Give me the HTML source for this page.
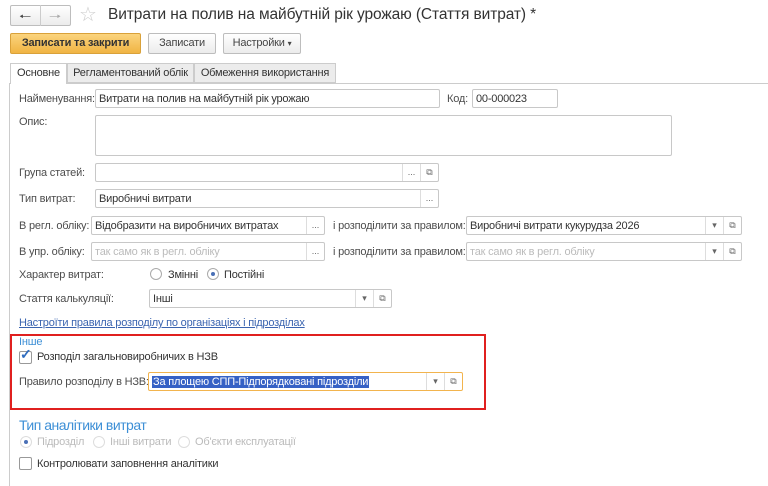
<!DOCTYPE html>
<html><head><meta charset="utf-8"><style>
*{box-sizing:border-box;margin:0;padding:0}
body{width:768px;height:486px;background:#fff;font-family:"Liberation Sans",Arial,sans-serif;font-size:11px;letter-spacing:-0.2px;color:#333;position:relative;overflow:hidden}
.a{position:absolute;white-space:nowrap}
.lbl{color:#4d4d4d}
.in{position:absolute;border:1px solid #c8c8c8;border-radius:2px;background:#fff;height:19px;padding:3px 3px;line-height:13px;white-space:nowrap;overflow:hidden}
.ph{color:#bbb}
.sb{position:absolute;top:0;bottom:0;width:18px;border-left:1px solid #ddd;text-align:center;font-size:9px;color:#666;line-height:17px;letter-spacing:0}
.btn{position:absolute;border:1px solid #bdbdbd;border-radius:2px;background:linear-gradient(#fff,#ececec);text-align:center;line-height:19px;color:#444}
.radio{position:absolute;width:12px;height:12px;border:1px solid #aaa;border-radius:50%;background:#fff}
.radio.on::after{content:"";position:absolute;left:3px;top:3px;width:4px;height:4px;border-radius:50%;background:#4a70b6}
.cb{position:absolute;width:13px;height:13px;border:1px solid #999;border-radius:2px;background:#fff}
</style></head><body>
<div class="btn" style="left:10px;top:5px;width:61px;height:21px"></div>
<div class="a" style="left:40px;top:5px;width:1px;height:21px;background:#ccc"></div>
<div class="a" style="left:19px;top:6px;font-size:14px;color:#444">&#129040;</div>
<div class="a" style="left:49px;top:6px;font-size:14px;color:#aaa">&#129042;</div>
<div class="a" style="left:79px;top:2px;font-size:20px;color:#ccc">☆</div>
<div class="a" style="left:108px;top:6px;font-size:15.5px;letter-spacing:-0.1px;color:#333">Витрати на полив на майбутній рік урожаю (Стаття витрат) *</div>

<div class="btn" style="left:10px;top:33px;width:131px;height:21px;background:linear-gradient(#fbd47e,#f0b443);border-color:#d9a13a;color:#333;font-weight:bold">Записати та закрити</div>
<div class="btn" style="left:148px;top:33px;width:68px;height:21px">Записати</div>
<div class="btn" style="left:223px;top:33px;width:78px;height:21px">Настройки <span style="font-size:8px">▾</span></div>

<div class="a" style="left:9px;top:83px;width:759px;height:1px;background:#ccc"></div>
<div class="a" style="left:9px;top:83px;width:1px;height:403px;background:#ccc"></div>
<div class="a" style="left:10px;top:63px;width:57px;height:21px;border:1px solid #ccc;border-bottom:none;background:#fff;text-align:center;line-height:19px">Основне</div>
<div class="a" style="left:67px;top:63px;width:127px;height:20px;border:1px solid #ccc;background:#ececec;text-align:center;line-height:18px">Регламентований облік</div>
<div class="a" style="left:194px;top:63px;width:142px;height:20px;border:1px solid #ccc;background:#ececec;text-align:center;line-height:18px">Обмеження використання</div>

<div class="a lbl" style="left:19px;top:93px">Найменування:</div>
<div class="in" style="left:95px;top:89px;width:345px">Витрати на полив на майбутній рік урожаю</div>
<div class="a lbl" style="left:447px;top:93px">Код:</div>
<div class="in" style="left:472px;top:89px;width:86px">00-000023</div>

<div class="a lbl" style="left:19px;top:116px">Опис:</div>
<div class="in" style="left:95px;top:115px;width:577px;height:41px"></div>

<div class="a lbl" style="left:19px;top:167px">Група статей:</div>
<div class="in" style="left:95px;top:163px;width:344px"><div class="sb" style="right:18px">...</div><div class="sb" style="right:0">⧉</div></div>

<div class="a lbl" style="left:19px;top:193px">Тип витрат:</div>
<div class="in" style="left:95px;top:189px;width:344px">Виробничі витрати<div class="sb" style="right:0">...</div></div>

<div class="a lbl" style="left:19px;top:220px">В регл. обліку:</div>
<div class="in" style="left:91px;top:216px;width:234px">Відобразити на виробничих витратах<div class="sb" style="right:0">...</div></div>
<div class="a lbl" style="left:333px;top:220px">і розподілити за правилом:</div>
<div class="in" style="left:466px;top:216px;width:276px">Виробничі витрати кукурудза 2026<div class="sb" style="right:18px">▾</div><div class="sb" style="right:0">⧉</div></div>

<div class="a lbl" style="left:19px;top:246px">В упр. обліку:</div>
<div class="in ph" style="left:91px;top:242px;width:234px">так само як в регл. обліку<div class="sb" style="right:0">...</div></div>
<div class="a lbl" style="left:333px;top:246px">і розподілити за правилом:</div>
<div class="in ph" style="left:466px;top:242px;width:276px">так само як в регл. обліку<div class="sb" style="right:18px;color:#666">▾</div><div class="sb" style="right:0;color:#666">⧉</div></div>

<div class="a lbl" style="left:19px;top:269px">Характер витрат:</div>
<div class="radio" style="left:150px;top:268px"></div><div class="a" style="left:168px;top:269px">Змінні</div>
<div class="radio on" style="left:207px;top:268px"></div><div class="a" style="left:224px;top:269px">Постійні</div>

<div class="a lbl" style="left:19px;top:293px">Стаття калькуляції:</div>
<div class="in" style="left:149px;top:289px;width:243px">Інші<div class="sb" style="right:18px">▾</div><div class="sb" style="right:0">⧉</div></div>

<div class="a" style="left:19px;top:317px;color:#3a64b0;text-decoration:underline">Настроїти правила розподілу по організаціях і підрозділах</div>

<div class="a" style="left:10px;top:334px;width:476px;height:76px;border:2px solid #e0201f"></div>
<div class="a" style="left:19px;top:336px;color:#3d8fd6">Інше</div>
<div class="cb" style="left:19px;top:351px"></div>
<div class="a" style="left:20px;top:346px;color:#2f6dc0;font-size:14px;font-weight:bold">✓</div>
<div class="a" style="left:37px;top:351px">Розподіл загальновиробничих в НЗВ</div>
<div class="a lbl" style="left:19px;top:376px">Правило розподілу в НЗВ:</div>
<div class="in" style="left:148px;top:372px;width:315px;border-color:#f2b44e"><span style="background:#3661c5;color:#fff;padding:0 1px">За площею СПП-Підпорядковані підрозділи</span><div class="sb" style="right:18px">▾</div><div class="sb" style="right:0">⧉</div></div>

<div class="a" style="left:19px;top:417px;font-size:14px;letter-spacing:-0.5px;color:#3d8fd6">Тип аналітики витрат</div>
<div class="radio on" style="left:20px;top:436px;border-color:#ddd"></div><div class="a" style="left:37px;top:436px;color:#bbb">Підрозділ</div>
<div class="radio" style="left:93px;top:436px;border-color:#ddd"></div><div class="a" style="left:110px;top:436px;color:#bbb">Інші витрати</div>
<div class="radio" style="left:178px;top:436px;border-color:#ddd"></div><div class="a" style="left:195px;top:436px;color:#bbb">Об'єкти експлуатації</div>
<div class="cb" style="left:19px;top:457px"></div>
<div class="a" style="left:37px;top:458px">Контролювати заповнення аналітики</div>
</body></html>
